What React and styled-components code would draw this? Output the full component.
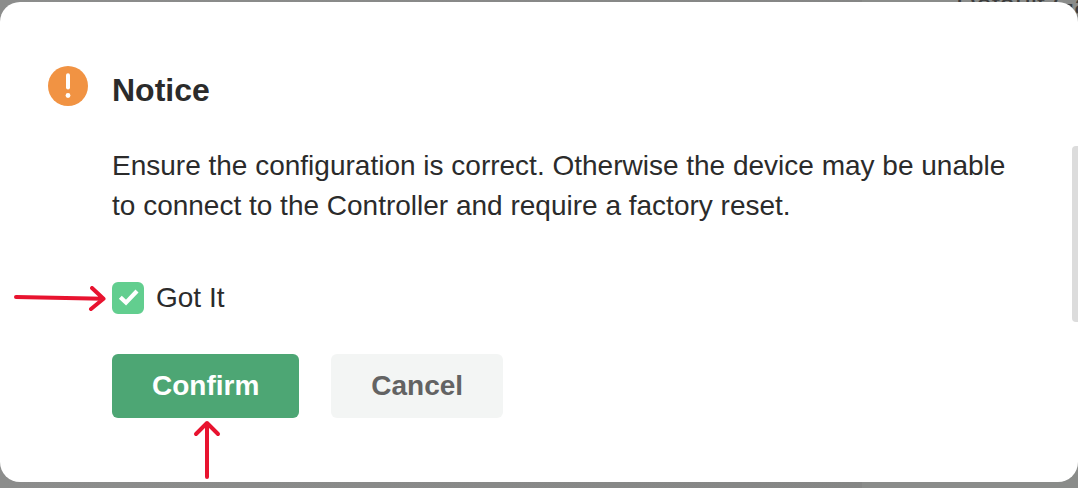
import React, { useState } from "react";
import styled, { createGlobalStyle } from "styled-components";

const GlobalStyle = createGlobalStyle`
  *, *::before, *::after { box-sizing: border-box; }
  body {
    margin: 0;
    background: #8a8b8a;
    color: #2b2b2b;
    font-family: "Liberation Sans", Arial, sans-serif;
  }
`;

const Page = styled.div`
  position: relative;
  min-height: 100vh;
  padding: 2px 0 6px;
  overflow: hidden;
  background: linear-gradient(90deg, #8c8d8c, #858685 80%, #8a8c8a 80%);
`;

const BackgroundLabel = styled.span`
  position: absolute;
  top: -7px;
  left: 956px;
  color: #3c3c3c;
  font-size: 28px;
  line-height: 24px;
  white-space: nowrap;
`;

const Dialog = styled.section`
  position: relative;
  display: flex;
  align-items: flex-start;
  gap: 24px;
  min-height: calc(100vh - 8px);
  padding: 64px 48px;
  border-radius: 20px;
  background: #fff;
`;

const WarningIcon = styled.svg`
  flex: none;
  width: 40px;
  height: 40px;
`;

const Content = styled.div`
  flex: 1;
  min-width: 0;
`;

const Title = styled.h1`
  margin: 4px 0 36px;
  font-size: 32px;
  line-height: 40px;
`;

const Message = styled.p`
  margin: 0;
  font-size: 28px;
  line-height: 40px;
`;

const CheckLabel = styled.label`
  position: relative;
  display: flex;
  align-items: center;
  gap: 12px;
  width: fit-content;
  margin: 52px 0 36px;
  font-size: 28px;
  line-height: 40px;
`;

const Checkbox = styled.input`
  appearance: none;
  width: 32px;
  height: 32px;
  margin: 0;
  border: 2px solid #62ce8f;
  border-radius: 6px;
  background: #fff;

  &:checked { background: #62ce8f; }
  &:checked + svg { visibility: visible; }
`;

const CheckMark = styled.svg`
  position: absolute;
  top: 4px;
  left: 0;
  width: 32px;
  height: 32px;
  visibility: hidden;
  pointer-events: none;
`;

const Actions = styled.div`
  display: flex;
  gap: 32px;
`;

const Button = styled.button`
  height: 64px;
  padding: 0 40px;
  border: 0;
  border-radius: 6px;
  background: ${({ $primary }) => ($primary ? "#4da674" : "#f3f5f4")};
  color: ${({ $primary }) => ($primary ? "#fff" : "#636363")};
  font: bold 28px/40px "Liberation Sans", Arial, sans-serif;
`;

const Anchor = styled.div`
  position: relative;
  display: flex;
`;

const Arrow = styled.svg`
  position: absolute;
  fill: none;
  stroke: #e8132f;
  stroke-width: 4;
  stroke-linecap: round;
  stroke-linejoin: round;
  pointer-events: none;
`;

const CheckArrow = styled(Arrow)`
  top: 8px;
  right: 100%;
  width: 100px;
  height: 28px;
`;

const ConfirmArrow = styled(Arrow)`
  top: 100%;
  left: 80px;
  width: 30px;
  height: 64px;
`;

const ScrollThumb = styled.div`
  position: absolute;
  top: 144px;
  right: 0;
  width: 6px;
  height: 176px;
  border-radius: 4px 0 0 4px;
  background: #dcdcdc;
`;

export default function App() {
  const [accepted, setAccepted] = useState(true);

  return (
    <Page>
      <GlobalStyle />
      <BackgroundLabel aria-hidden="true">Default Ga</BackgroundLabel>
      <Dialog role="dialog" aria-labelledby="notice-title">
        <WarningIcon viewBox="0 0 40 40" aria-hidden="true">
          <circle cx="20" cy="20" r="20" fill="#f19343" />
          <path d="M20 9.2v12.2" stroke="#fff" strokeWidth="4" strokeLinecap="round" />
          <circle cx="20" cy="29.5" r="2.4" fill="#fff" />
        </WarningIcon>
        <Content>
          <Title id="notice-title">Notice</Title>
          <Message>
            Ensure the configuration is correct. Otherwise the device may be unable
            to connect to the Controller and require a factory reset.
          </Message>
          <CheckLabel>
            <Checkbox
              type="checkbox"
              checked={accepted}
              onChange={(event) => setAccepted(event.target.checked)}
            />
            <CheckMark viewBox="0 0 32 32" aria-hidden="true">
              <path d="M8.3 15.2L14 20.6L25 9" fill="none" stroke="#fff" strokeWidth="4.2" />
            </CheckMark>
            Got It
            <CheckArrow viewBox="0 0 100 28" aria-hidden="true">
              <path d="M4 11L91 12.8M80 2L91.5 12.8L79 23" />
            </CheckArrow>
          </CheckLabel>
          <Actions>
            <Anchor>
              <Button type="button" $primary>Confirm</Button>
              <ConfirmArrow viewBox="0 0 30 64" aria-hidden="true">
                <path d="M15 59V5M4 16L15 5L26 16" />
              </ConfirmArrow>
            </Anchor>
            <Button type="button">Cancel</Button>
          </Actions>
        </Content>
        <ScrollThumb />
      </Dialog>
    </Page>
  );
}
